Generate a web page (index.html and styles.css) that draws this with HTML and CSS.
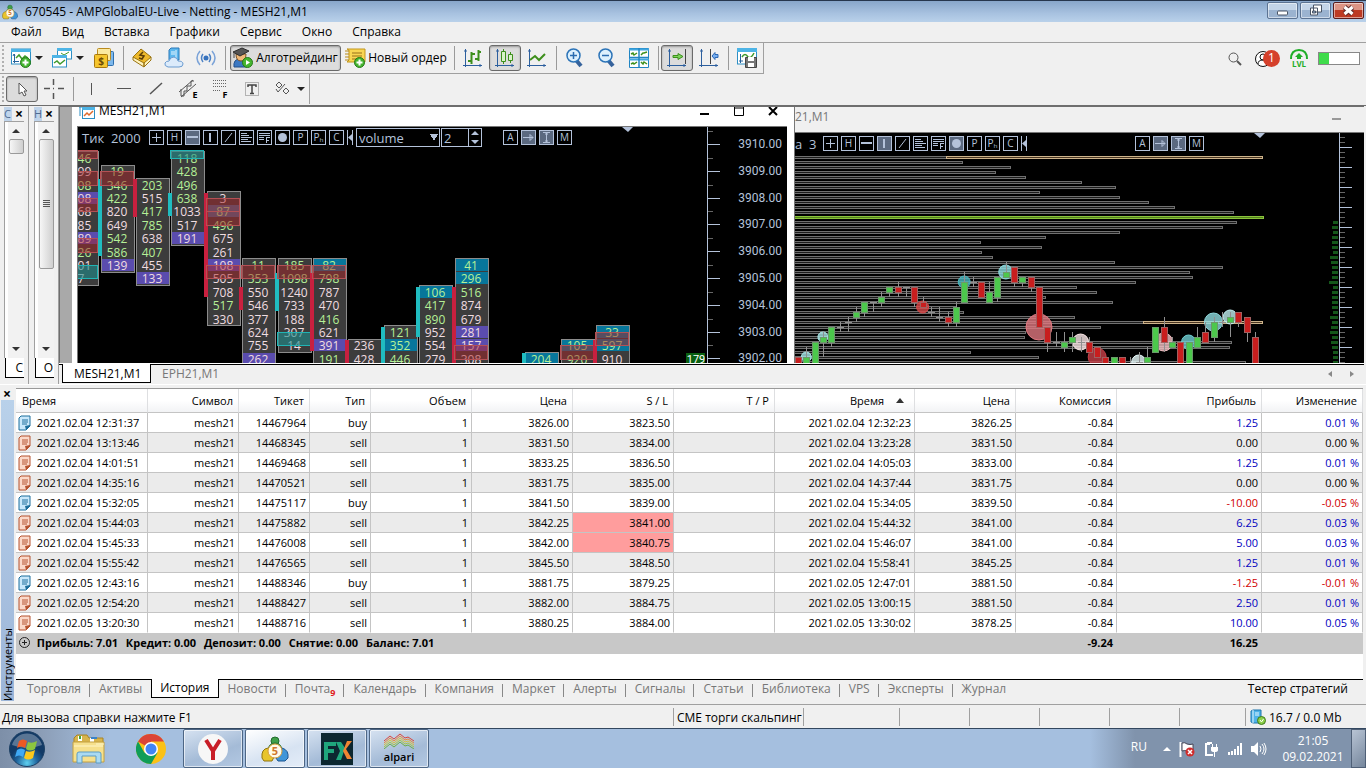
FILE: index.html
```
<!DOCTYPE html>
<html lang="ru">
<head>
    <meta charset="UTF-8">
    <meta name="viewport" content="width=device-width, initial-scale=1.0">
    <title>670545 - AMPGlobalEU-Live - Netting - MESH21,M1</title>
    <link rel="stylesheet" href="styles.css">
</head>
<body>
    <svg class="defs" aria-hidden="true">
        <symbol id="logo" viewBox="0 0 28 26">
            <circle cx="14" cy="5" r="4" fill="#3fa04a" stroke="#1f6b2c"/>
            <path d="M7 14q1-7 7-7t7 7z" fill="#57b65b" stroke="#1f6b2c"/>
            <path d="M1 22q-1-9 6-10 6 1 6 9l-2 4H3z" fill="#e8c52c" stroke="#8f7410"/>
            <path d="M15 22q0-9 6-10 7 2 6 10l-3 3h-7z" fill="#3f95d8" stroke="#1c5590"/>
            <circle cx="14" cy="15" r="7" fill="#fffbe8" stroke="#d59a3a"/>
            <text x="14" y="19" class="logo-five">5</text>
        </symbol>
        <symbol id="doc" viewBox="0 0 13 16">
            <path d="M3 1h9v10l-4 4H1V3z" fill="var(--page)" stroke="currentColor"/>
            <path d="M4 5h6M4 7h6M4 9h5" stroke="currentColor"/>
            <path d="M12 10v1l-4 4-1-4z" fill="currentColor"/>
        </symbol>
    </svg>

    <header class="titlebar">
        <svg class="app-icon"><use href="#logo"/></svg>
        <h1>670545 - AMPGlobalEU-Live - Netting - MESH21,M1</h1>
        <div class="window-buttons">
            <button type="button" aria-label="Свернуть"><svg viewBox="0 0 28 15"><rect x="9" y="8" width="10" height="4" rx="1" fill="#fff" stroke="#4a5566"/></svg></button>
            <button type="button" aria-label="Восстановить"><svg viewBox="0 0 28 15"><path d="M12 2h8v7h-8zM9 5h7v7H9z" fill="#fff" stroke="#4a5566"/><path d="M11 8h3v2h-3z" fill="#8ea5c2" stroke="#4a5566"/></svg></button>
            <button type="button" class="close" aria-label="Закрыть"><svg viewBox="0 0 28 15"><path d="M10 4l8 7M18 4l-8 7" stroke="#5d2b2b" stroke-width="5"/><path d="M10 4l8 7M18 4l-8 7" stroke="#fff" stroke-width="3"/></svg></button>
        </div>
    </header>

    <nav class="menu">
        <a href="#file">Файл</a>
        <a href="#view">Вид</a>
        <a href="#insert">Вставка</a>
        <a href="#charts">Графики</a>
        <a href="#tools">Сервис</a>
        <a href="#window">Окно</a>
        <a href="#help">Справка</a>
    </nav>

    <div class="toolbar-row">
        <div class="toolbar">
            <span class="grip"></span>
            <button type="button" class="tool drop" aria-label="Новый график">
                <svg viewBox="0 0 20 20"><rect x=".5" y="1" width="19" height="15" fill="#fff" stroke="#2d8fc4"/><rect x="0" y="1" width="20" height="3" fill="#4db4e6"/><path d="M3.500 6v9M2 13.500h6M3 6l-1 2M3 6l1 2" stroke="#27639c" fill="none"/><path d="M5 10l3-3 3 4 3-3 3 2" stroke="#3f9a2c" fill="none" stroke-width="1.5"/><circle cx="14.500" cy="14.500" r="5" fill="#45b52f" stroke="#257a18"/><path d="M14.500 11.500v6M11.500 14.500h6" stroke="#fff" stroke-width="2"/></svg>
            </button>
            <button type="button" class="tool drop" aria-label="Профили">
                <svg viewBox="0 0 20 20"><rect x="5.500" y="1" width="14" height="10" fill="#fff" stroke="#2d8fc4"/><rect x="5" y="0" width="15" height="3" fill="#4db4e6"/><path d="M9 5l3 2 5-3" stroke="#3f9a2c" fill="none"/><rect x=".5" y="8" width="14" height="11" fill="#fff" stroke="#2d8fc4"/><rect x="0" y="7" width="15" height="3" fill="#4db4e6"/><path d="M2 15l3-2 3 3 5-4" stroke="#3f9a2c" fill="none" stroke-width="1.500"/></svg>
            </button>
            <button type="button" class="tool" aria-label="Обзор рынка">
                <svg viewBox="0 0 20 20"><rect x="6.500" y="3.500" width="13" height="14" rx="1" fill="#7db8ec" stroke="#2d6fae"/><rect x="3.500" y=".5" width="13" height="12" rx="1" fill="#fbe9a0" stroke="#b98a1e"/><rect x=".5" y="6.500" width="13" height="13" rx="1" fill="#f5c52e" stroke="#a8780f"/><text x="7" y="17" class="dollar">$</text></svg>
            </button>
            <span class="sep"></span>
            <button type="button" class="tool" aria-label="MQL5">
                <svg viewBox="0 0 20 20"><path d="M1 9l8-8 10 8-7 9z" fill="#edb92c" stroke="#9b7410"/><path d="M1 9l11 6v4L1 12zM12 15l7-6v3l-7 7z" fill="#fff3bd" stroke="#9b7410"/><path d="M11 4l-3 3 4 1-2 3-3-1" fill="none" stroke="#5a3c06" stroke-width="1.500"/></svg>
            </button>
            <button type="button" class="tool" aria-label="Облако">
                <svg viewBox="0 0 20 20"><path d="M5 2l2-2h8v12H5z" fill="#5cb7ee" stroke="#2a78b8"/><path d="M7 4h4M7 6h4M12 2v8" stroke="#e8f6ff"/><path d="M4 19q-4-1-3-4 1-2 4-2 1-4 5-4 4 1 4 4 5 0 5 3t-4 3z" fill="#dcebfb" stroke="#6a9bd0"/></svg>
            </button>
            <button type="button" class="tool" aria-label="Сигналы">
                <svg viewBox="0 0 20 20"><circle cx="10" cy="10" r="2.500" fill="#3672bd"/><path d="M7 6q-3 4 0 8M13 6q3 4 0 8" fill="none" stroke="#4d83c6" stroke-width="1.500"/><path d="M4 3q-6 7 0 14M16 3q6 7 0 14" fill="none" stroke="#7ba3d8" stroke-width="1.500"/></svg>
            </button>
            <span class="sep"></span>
            <button type="button" class="tool labeled pressed">
                <svg viewBox="0 0 20 20"><path d="M1 19q-1-8 6-8t7 8z" fill="#3c78c2" stroke="#234f88"/><path d="M3 6q0 7 5 7t5-7z" fill="#f0b878" stroke="#7a5228"/><path d="M0 4l9-4 7 3-9 5z" fill="#555" stroke="#2d2d2d"/><path d="M1 5v5" stroke="#444"/><circle cx="14.500" cy="14.500" r="5" fill="#45b52f" stroke="#257a18"/><path d="M13 12l4 2.500-4 2.500z" fill="#fff"/></svg>
                Алготрейдинг
            </button>
            <button type="button" class="tool labeled order">
                <svg viewBox="0 0 20 20"><path d="M2 1h18v13H2l2-2V2z" fill="#f9d653" stroke="#c3961c"/><path d="M0 3h4M0 6h4M0 9h4M0 12h4" stroke="#b78a18"/><path d="M7 5h10M7 8h10M7 11h6" stroke="#97701a"/><circle cx="14.500" cy="14.500" r="5" fill="#45b52f" stroke="#257a18"/><path d="M14.500 11.500v6M11.500 14.500h6" stroke="#fff" stroke-width="2"/></svg>
                Новый ордер
            </button>
            <span class="sep"></span>
            <button type="button" class="tool" aria-label="Бары">
                <svg viewBox="0 0 20 20"><path d="M2.500 1v18M0 17.500h19M1 3h3M17 16v3" stroke="#2c5f9e" fill="none"/><path d="M8.500 4v12M5 13h3M8 6h4M15.500 2v11M12 11h3M15 4h3" stroke="#3d8f1c" stroke-width="2" fill="none"/></svg>
            </button>
            <button type="button" class="tool pressed" aria-label="Свечи">
                <svg viewBox="0 0 20 20"><path d="M2.500 1v18M0 17.500h19M1 3h3M17 16v3" stroke="#2c5f9e" fill="none"/><path d="M8.500 1v15M15.500 4v11" stroke="#3d8f1c"/><path d="M6.500 3.500h4v10h-4zM13.500 6.500h4v6h-4z" fill="#d9f4c8" stroke="#3d8f1c"/></svg>
            </button>
            <button type="button" class="tool" aria-label="Линия">
                <svg viewBox="0 0 20 20"><path d="M2.500 1v18M0 17.500h19M1 3h3M17 16v3" stroke="#2c5f9e" fill="none"/><path d="M3 12l5-4 4 4 6-6" fill="none" stroke="#3d8f1c" stroke-width="2"/></svg>
            </button>
            <span class="sep"></span>
            <button type="button" class="tool" aria-label="Увеличить">
                <svg viewBox="0 0 20 20"><path d="M11 12l5 6" stroke="#36639c" stroke-width="4"/><circle cx="8.500" cy="7.500" r="6.500" fill="#dcf0fd" stroke="#2c74b8" stroke-width="1.500"/><path d="M8.500 4v7M5 7.500h7" stroke="#2a6cb0" stroke-width="1.500"/></svg>
            </button>
            <button type="button" class="tool" aria-label="Уменьшить">
                <svg viewBox="0 0 20 20"><path d="M11 12l5 6" stroke="#36639c" stroke-width="4"/><circle cx="8.500" cy="7.500" r="6.500" fill="#dcf0fd" stroke="#2c74b8" stroke-width="1.500"/><path d="M5 7.500h7" stroke="#2a6cb0" stroke-width="1.500"/></svg>
            </button>
            <button type="button" class="tool" aria-label="Плитка">
                <svg viewBox="0 0 20 20"><path d="M.5.5h19v19H.5z" fill="#fff" stroke="#2184c2"/><path d="M0 1.500h20M0 11.500h20" stroke="#3fa6e0" stroke-width="2"/><path d="M10 0v20M0 9.500h20" stroke="#2184c2" stroke-width="1.500"/><path d="M2 6l2-1 1 2 3-2M12 7l2-2h1l3-1M2 16l2-1 1 1 3-2M12 14l2 2 1-2 3 2" stroke="#3d8f1c" fill="none" stroke-width="1.500"/></svg>
            </button>
            <span class="sep"></span>
            <button type="button" class="tool pressed" aria-label="Автопрокрутка">
                <svg viewBox="0 0 20 20"><path d="M2.500 1v18M0 17.500h19M1 3h3M17 16v3" stroke="#2c5f9e" fill="none"/><path d="M18.500 1v15" stroke="#444"/><path d="M6 7.500h5v-2l5 3-5 3v-2H6z" fill="#7bd35c" stroke="#3d8f1c"/></svg>
            </button>
            <button type="button" class="tool" aria-label="Сдвиг графика">
                <svg viewBox="0 0 20 20"><path d="M2.500 1v18M0 17.500h19M1 3h3M17 16v3" stroke="#2c5f9e" fill="none"/><path d="M11.500 1v15" stroke="#444"/><path d="M19 6.500h-3v-2l-3 3.500 3 3.500v-2h3z" fill="#77aef0" stroke="#2c68b5"/></svg>
            </button>
            <span class="sep"></span>
            <button type="button" class="tool" aria-label="Сохранить шаблон">
                <svg viewBox="0 0 20 20"><rect x=".5" y="1" width="19" height="15" fill="#fff" stroke="#2d8fc4"/><rect x="0" y="0" width="20" height="4" fill="#4db4e6"/><path d="M3.500 6v9M2 13h4" stroke="#27639c"/><path d="M5 9q3-5 6 0 3 2 6-4" stroke="#3f9a2c" fill="none" stroke-width="1.500"/><path d="M8.500 9.500h11v10h-11z" fill="#777" stroke="#444"/><path d="M11 9h6v4h-6zM11 15h6v4h-6z" fill="#fff"/></svg>
            </button>
        </div>
        <div class="account">
            <button type="button" aria-label="Поиск"><svg width="14" height="14" viewBox="0 0 14 14"><circle cx="5.500" cy="5.500" r="4.500" fill="none" stroke="#555"/><path d="M9 9l4 4" stroke="#555" stroke-width="2"/></svg></button>
            <button type="button" class="user" aria-label="Аккаунт">
                <svg width="16" height="16" viewBox="0 0 16 16"><circle cx="8" cy="8" r="7.500" fill="#fff" stroke="#111"/><circle cx="8" cy="6" r="3" fill="none" stroke="#111"/><path d="M3 13q0-4 5-4t5 4" fill="none" stroke="#111"/></svg>
                <span class="badge">1</span>
            </button>
            <div class="level">
                <svg width="18" height="11" viewBox="0 0 18 11"><path d="M1 10q0-9 8-9t8 9" fill="none" stroke="#1fae28" stroke-width="2"/><path d="M9 4l4 4h-2v2H7V8H5z" fill="#1fae28"/></svg>
                <span>LVL</span>
            </div>
            <div class="load"><div></div></div>
        </div>
    </div>

    <div class="toolbar-row second">
        <div class="toolbar">
            <span class="grip"></span>
            <button type="button" class="tool pressed" aria-label="Курсор"><svg viewBox="0 0 20 20"><path d="M7 4v11l3-2 2 4 2-1-2-4h3z" fill="#fff" stroke="#555"/></svg></button>
            <button type="button" class="tool" aria-label="Перекрестие"><svg viewBox="0 0 20 20"><path d="M9.500 0v6M9.500 14v6M0 9.500h6M14 9.500h6M9 9.500h1" stroke="#555" stroke-width="1.500"/></svg></button>
            <span class="sep"></span>
            <button type="button" class="tool" aria-label="Вертикальная линия"><svg viewBox="0 0 20 20"><path d="M9.500 4v12" stroke="#555"/></svg></button>
            <button type="button" class="tool" aria-label="Горизонтальная линия"><svg viewBox="0 0 20 20"><path d="M3 9.500h14" stroke="#555"/></svg></button>
            <button type="button" class="tool" aria-label="Трендовая линия"><svg viewBox="0 0 20 20"><path d="M4 15L16 4" stroke="#555" stroke-width="1.500"/></svg></button>
            <button type="button" class="tool" aria-label="Канал"><svg viewBox="0 0 20 20"><path d="M1 13L15 1M3 18L18 5" stroke="#555"/><path d="M3 10v7h3v-5h3V7h4V2h3" fill="none" stroke="#555"/><text x="17" y="19" class="letter">E</text></svg></button>
            <button type="button" class="tool" aria-label="Фибоначчи"><svg viewBox="0 0 20 20"><path d="M3 1.500h14M3 4.500h14M3 7.500h14M3 11.500h8" stroke="#666" stroke-dasharray="1 1"/><text x="15" y="19" class="letter">F</text></svg></button>
            <button type="button" class="tool" aria-label="Текст"><svg viewBox="0 0 20 20"><rect x="3.500" y="3.500" width="13" height="13" fill="none" stroke="#777" stroke-dasharray="1 1"/><path d="M6 8V6h8v2M10 6v9M8 14.500h4" fill="none" stroke="#444" stroke-width="1.500"/></svg></button>
            <button type="button" class="tool drop" aria-label="Объекты"><svg viewBox="0 0 20 20"><path d="M6 3l3 3-3 3-3-3zM13 9l3 3-3 3-3-3zM3 10l2 3 7-8" fill="none" stroke="#555"/></svg></button>
        </div>
    </div>

    <main class="workspace">
        <aside class="dock">
            <div class="dock-head"><span>С</span><button type="button" aria-label="Закрыть">×</button></div>
            <div class="dock-body"><div class="scroll"><i class="up"></i><b></b><i class="down"></i></div></div>
            <a class="dock-tab" href="#symbols">С</a>
        </aside>
        <aside class="dock wide">
            <div class="dock-head"><span>Н</span><button type="button" aria-label="Закрыть">×</button></div>
            <div class="dock-body"><div class="scroll"><i class="up"></i><b class="long"></b><i class="down"></i></div></div>
            <a class="dock-tab" href="#common">О</a>
        </aside>

        <section class="mdi">
            <div class="windows">
                <article class="chart-window active">
                    <div class="chart-title">
                        <svg class="chart-icon" viewBox="0 0 16 12"><path d="M1 0v9M0 0h3" stroke="#2d8fc4"/><rect x="3.500" y=".5" width="12" height="11" fill="#fff" stroke="#2d8fc4"/><rect x="3" y="0" width="13" height="3" fill="#4db4e6"/><path d="M5 9l3-3 2 2 4-4" fill="none" stroke="#e06a2c" stroke-width="1.500"/></svg>
                        <h2>MESH21,M1</h2>
                        <div class="chart-controls">
                            <button type="button" aria-label="Свернуть"><svg viewBox="0 0 10 10"><path d="M0 7h9" stroke="#000" stroke-width="2"/></svg></button>
                            <button type="button" aria-label="Развернуть"><svg viewBox="0 0 10 10"><path d="M.5 0v8.500h9V0M0 1h10" fill="none" stroke="#000"/></svg></button>
                            <button type="button" aria-label="Закрыть"><svg viewBox="0 0 10 10"><path d="M1 0l8 8M9 0L1 8" stroke="#000" stroke-width="2"/></svg></button>
                        </div>
                    </div>
                    <div class="chart">
                        <div class="chart-bar">
                            <span class="chart-label">Тик&nbsp; 2000</span>
                            <span class="tools" data-on="2"></span>
                            <select aria-label="Режим"><option>volume</option></select>
                            <span class="stepper"><input type="text" value="2" aria-label="Шаг"><i class="up"></i><i class="down"></i></span>
                            <span class="modes"></span>
                        </div>
                        <svg class="plot" id="footprint"></svg>
                        <svg class="scale" id="priceScale"></svg>
                    </div>
                </article>
                <article class="chart-window">
                    <div class="chart-title">
                        <h2>21,M1</h2>
                        <div class="chart-controls">
                            <button type="button" aria-label="Свернуть"><svg viewBox="0 0 10 10"><path d="M0 6h9" stroke="#999" stroke-width="2"/></svg></button>
                        </div>
                    </div>
                    <div class="chart">
                        <div class="chart-bar">
                            <span class="chart-label">а&nbsp; 3</span>
                            <span class="tools" data-on="3,7"></span>
                            <span class="modes"></span>
                        </div>
                        <svg class="plot" id="candles"></svg>
                        <svg class="scale" id="stepScale"></svg>
                    </div>
                </article>
            </div>
            <nav class="chart-tabs">
                <a class="current" href="#mesh">MESH21,M1</a>
                <a href="#eph">EPH21,M1</a>
                <span class="arrows"><i></i><i class="next"></i></span>
            </nav>
        </section>
    </main>

    <section class="toolbox">
        <div class="toolbox-side">
            <button type="button" aria-label="Закрыть">×</button>
            <span>Инструменты</span>
        </div>
        <div class="toolbox-main">
            <div class="history">
                <table>
                    <colgroup>
                        <col class="w132"><col class="w91"><col class="w71"><col class="w61">
                        <col class="w101"><col class="w101"><col class="w101"><col class="w101">
                        <col class="w140"><col class="w101"><col class="w101"><col class="w145"><col class="w101">
                    </colgroup>
                    <thead>
                        <tr>
                            <th>Время</th><th>Символ</th><th>Тикет</th><th>Тип</th><th>Объем</th>
                            <th>Цена</th><th>S / L</th><th>T / P</th><th>Время <i class="sorted"></i></th>
                            <th>Цена</th><th>Комиссия</th><th>Прибыль</th><th>Изменение</th>
                        </tr>
                    </thead>
                    <tbody id="deals"></tbody>
                    <tfoot>
                        <tr>
                            <td colspan="10">
                                <svg viewBox="0 0 13 16"><circle cx="6.500" cy="7.500" r="5" fill="none" stroke="#222"/><path d="M6.500 5v5M4 7.500h5" stroke="#222"/></svg>
                                <span>Прибыль: 7.01</span> <span>Кредит: 0.00</span> <span>Депозит: 0.00</span> <span>Снятие: 0.00</span> <span>Баланс: 7.01</span>
                            </td>
                            <td>-9.24</td><td>16.25</td><td></td>
                        </tr>
                    </tfoot>
                </table>
            </div>
            <nav class="tabs">
                <a href="#trade">Торговля</a>
                <a class="last" href="#assets">Активы</a>
                <a class="current" href="#history">История</a>
                <a href="#news">Новости</a>
                <a href="#mail">Почта<sub>9</sub></a>
                <a href="#calendar">Календарь</a>
                <a href="#company">Компания</a>
                <a href="#market">Маркет</a>
                <a href="#alerts">Алерты</a>
                <a href="#signals">Сигналы</a>
                <a href="#articles">Статьи</a>
                <a href="#library">Библиотека</a>
                <a href="#vps">VPS</a>
                <a href="#experts">Эксперты</a>
                <a class="last" href="#journal">Журнал</a>
                <a class="tester" href="#tester">Тестер стратегий</a>
            </nav>
        </div>
    </section>

    <footer class="status">
        <span class="hint">Для вызова справки нажмите F1</span>
        <span class="profile">CME торги скальпинг</span>
        <span class="cell big"></span>
        <span class="cell"></span>
        <span class="cell"></span>
        <span class="cell"></span>
        <span class="cell"></span>
        <span class="cell"></span>
        <span class="traffic">
            <svg width="16" height="16" viewBox="0 0 16 16"><path d="M1 2l2-1h8v13H3l-2-1z" fill="#4fb3e8" stroke="#1d74ad"/><path d="M3 1v13M5 4h4M5 6h4" stroke="#e3f5ff"/><circle cx="11.500" cy="11.500" r="4" fill="#8ccf4a" stroke="#3c7a1c"/><path d="M10 11l1.500 2 2-3" fill="none" stroke="#fff"/></svg>
            16.7 / 0.0 Mb
        </span>
    </footer>

    <footer class="taskbar">
        <button type="button" class="start" aria-label="Пуск">
            <svg width="38" height="38" viewBox="0 0 38 38">
                <defs><radialGradient id="orb" cy=".9"><stop offset="0" stop-color="#5fd0f0"/><stop offset=".6" stop-color="#1f639c"/><stop offset="1" stop-color="#123a66"/></radialGradient></defs>
                <circle cx="19" cy="19" r="17.500" fill="url(#orb)" stroke="#1d4064"/>
                <path d="M4 15a15.500 15.500 0 0 1 30 0q-15 6-30 0z" fill="#fff" opacity=".3"/>
                <path d="M11 11q4-3 8 0l-2 7q-4-3-8 0z" fill="#ee5a24"/>
                <path d="M20 12q4 2 9-1l-2 8q-5 3-9 0z" fill="#8dc63f"/>
                <path d="M9 20q4-3 8 0l-2 7q-4-3-8 0z" fill="#3fa9f5"/>
                <path d="M18 21q4 2 9-1l-2 8q-5 3-9 0z" fill="#fcc81b"/>
            </svg>
        </button>
        <button type="button" class="pin" aria-label="Проводник">
            <svg width="34" height="30" viewBox="0 0 34 30"><path d="M2 4l3-3h10l2 3h14v5H2z" fill="#d8b44c" stroke="#a88425"/><path d="M6 2h4v5H6zM18 4h4v5h-4z" fill="#fff"/><path d="M7 2h2v3H7z" fill="#3fa63a"/><path d="M19 3h6v2h-6z" fill="#3b83c8"/><path d="M1 8h31v20H1z" fill="#f6e08c" stroke="#c3a040"/><path d="M24 10h8M2 12h29" stroke="#fff6c8"/><path d="M5 29V20q0-2 2-2h20q2 0 2 2v9h-5v-7H10v7z" fill="#aadaf2" stroke="#5b9cc4"/></svg>
        </button>
        <button type="button" class="pin" aria-label="Chrome">
            <svg width="30" height="30" viewBox="0 0 30 30"><circle cx="15" cy="15" r="15" fill="#fbc116"/><path d="M15 15L2 7.500A15 15 0 0 1 28 7.500H15z" fill="#db4437"/><path d="M2 7.500A15 15 0 0 0 15 30l6.500-11.200L15 15 8.500 18.800z" fill="#0f9d58"/><circle cx="15" cy="15" r="7" fill="#fff"/><circle cx="15" cy="15" r="5.500" fill="#4285f4"/></svg>
        </button>
        <button type="button" class="task" aria-label="Яндекс Браузер">
            <svg width="30" height="30" viewBox="0 0 30 30"><circle cx="15" cy="15" r="15" fill="#f7f7f7"/><path d="M8 6l7 11 7-11M15 16v10" fill="none" stroke="#c81e28" stroke-width="4"/></svg>
        </button>
        <button type="button" class="task focused" aria-label="MetaTrader 5">
            <svg width="28" height="28" viewBox="0 0 28 26"><use href="#logo"/></svg>
        </button>
        <button type="button" class="task" aria-label="FX">
            <svg width="32" height="32" viewBox="0 0 32 32"><rect width="32" height="32" fill="#0c2730"/><path d="M3 9h12v4H7v3h6v4H7v7H3z" fill="#1fa67c"/><path d="M15 9h5l4 6-4 12h-5l4-9z" fill="#1fa67c"/><path d="M31 8l-6 8 6 10h-5l-4-8 4-10z" fill="#ef8532"/></svg>
        </button>
        <button type="button" class="task alpari">
            <svg width="32" height="16" viewBox="0 0 32 16"><g fill="none"><path d="M1 8l6-5 4 3 6-5 5 4 3-1 6 4" stroke="#d8453e"/><path d="M1 10l6-5 4 3 6-5 5 4 3-1 6 4" stroke="#e88b3a"/><path d="M1 12l6-5 4 3 6-5 5 4 3-1 6 4" stroke="#d8c23c"/><path d="M1 14l6-5 4 3 6-5 5 4 3-1 6 4" stroke="#a9c544"/><path d="M1 16l6-5 4 3 6-5 5 4 3-1 6 4" stroke="#6cae48"/></g></svg>
            <span>alpari</span>
        </button>
        <div class="tray">
            <span class="lang">RU</span>
            <svg width="8" height="4" viewBox="0 0 8 4"><path d="M4 0l4 4H0z" fill="#fff"/></svg>
            <svg width="16" height="16" viewBox="0 0 16 16"><path d="M1.500 1v15" stroke="#fff" stroke-width="2"/><path d="M3 2q3-1 5 1 3 1 6 0v7q-4 1-6 0t-5 0z" fill="#fff" stroke="#445"/><circle cx="11" cy="11" r="4.500" fill="#cf2d2d"/><path d="M9 9l4 4M13 9l-4 4" stroke="#fff" stroke-width="1.500"/></svg>
            <svg width="16" height="16" viewBox="0 0 16 16"><path d="M7 3H3v11h7" fill="none" stroke="#fff" stroke-width="2"/><path d="M4 1h5v2H4z" fill="#fff"/><path d="M8 6h7v3q0 2-3.500 2T8 9zM9 3h1v3H9zM13 3h1v3h-1zM11 11h1v5h-1z" fill="#fff"/></svg>
            <svg width="16" height="12" viewBox="0 0 16 12"><path d="M1 9h2v3H1zM4 8h2v4H4zM7 6h2v6H7zM10 3h2v9h-2zM13 0h2v12h-2z" fill="#fff"/></svg>
            <svg width="16" height="14" viewBox="0 0 16 14"><path d="M0 4h3l4-4v14l-4-4H0z" fill="#fff"/><path d="M9 4q2 3 0 6M11 2q4 5 0 10M13 1q4 6 0 12" fill="none" stroke="#fff"/></svg>
        </div>
        <div class="clock"><time>21:05</time><time>09.02.2021</time></div>
        <button type="button" class="desktop" aria-label="Показать рабочий стол"></button>
    </footer>

    <script src="script.js"></script>
</body>
</html>
```
FILE: styles.css
```
* {
    box-sizing: border-box;
}
body {
    margin: 0;
    height: 100vh;
    display: flex;
    flex-direction: column;
    overflow: hidden;
    background: #f0f0f0;
    color: #000;
    font: 12px/16px "Open Sans", "Noto Sans", sans-serif;
}
a {
    color: inherit;
    text-decoration: none;
}
button {
    margin: 0;
    padding: 0;
    border: 0;
    background: none;
    color: inherit;
    font: inherit;
}
h1, h2 {
    margin: 0;
    font-size: 12px;
    font-weight: normal;
}
svg {
    flex: none;
    display: block;
}
.defs {
    position: absolute;
    width: 0;
    height: 0;
}
.logo-five {
    font: bold 11px "Open Sans", sans-serif;
    text-anchor: middle;
    fill: #d0762a;
}

/* title bar and menu */
.titlebar {
    flex: none;
    display: flex;
    align-items: center;
    height: 22px;
    padding-left: 2px;
    border-top: 1px solid #26364d;
    background: linear-gradient(#88a6ca, #a8c2e0 60%, #b9d1ea);
}
.titlebar h1 {
    margin-left: 7px;
}
.app-icon {
    width: 16px;
    height: 16px;
}
.window-buttons {
    display: flex;
    gap: 2px;
    align-self: flex-start;
    margin: 1px 2px 0 auto;
}
.window-buttons button {
    width: 31px;
    height: 17px;
    border: 1px solid #5c7392;
    border-radius: 2px;
    background: linear-gradient(#c3d4e8 50%, #9bb3d0 50%);
    box-shadow: inset 0 0 0 1px rgba(255, 255, 255, 0.5);
}
.window-buttons .close {
    border-color: #5a1d1d;
    background: linear-gradient(#dd9484 50%, #bd3a24 50%);
}
.window-buttons svg {
    width: 29px;
    height: 15px;
}
.menu {
    flex: none;
    display: flex;
    gap: 20px;
    height: 21px;
    padding: 2px 11px 0;
    border-bottom: 1px solid #a0a0a0;
}

/* toolbars */
.toolbar-row {
    flex: none;
    display: flex;
    justify-content: space-between;
    height: 31px;
}
.toolbar {
    display: flex;
    align-items: center;
    height: 31px;
    border-right: 1px solid #a0a0a0;
    border-bottom: 1px solid #a0a0a0;
}
.second .toolbar {
    height: 30px;
    border-bottom: 0;
}
.grip {
    width: 2px;
    height: 26px;
    margin: 0 2px;
    background: repeating-linear-gradient(#b0b0b0 0 2px, #f0f0f0 2px 4px);
}
.sep {
    width: 1px;
    height: 24px;
    margin: 0 2px 0 3px;
    background: #9a9a9a;
}
.tool {
    display: flex;
    align-items: center;
    justify-content: center;
    width: 32px;
    height: 26px;
    border: 1px solid transparent;
    border-radius: 3px;
}
.tool svg {
    width: 20px;
    height: 20px;
    overflow: visible;
}
.drop {
    width: 41px;
    gap: 4px;
}
.drop::after {
    content: "";
    border: 4px solid transparent;
    border-top-color: #222;
    border-bottom: 0;
}
.pressed {
    border-color: #6a6a6a;
    background: #dcdcdc;
    box-shadow: inset 0 1px 2px #999;
}
.labeled {
    width: 111px;
    margin-left: 2px;
    gap: 3px;
    white-space: nowrap;
}
.order {
    width: 110px;
    margin-left: 0;
}
.dollar {
    font: bold 10px "Open Sans", sans-serif;
    text-anchor: middle;
    fill: #6b4a05;
}
.letter {
    font: bold 9px "Open Sans", sans-serif;
    text-anchor: middle;
}
.account {
    display: flex;
    align-items: center;
    gap: 10px;
    margin-right: 6px;
}
.user {
    position: relative;
    width: 30px;
    margin-left: -2px;
    padding-left: 5px;
}
.badge {
    position: absolute;
    top: -1px;
    right: 0;
    width: 17px;
    height: 17px;
    border-radius: 50%;
    background: #d5402b;
    color: #fff;
    text-align: center;
}
.level {
    width: 18px;
    text-align: center;
    color: #1fae28;
    font: bold 8px/8px "Open Sans", sans-serif;
}
.load {
    width: 42px;
    height: 13px;
    border: 1px solid #888;
    background: #fff;
}
.load div {
    width: 25%;
    height: 11px;
    background: #3fdc4b;
}

/* docked panels */
.workspace {
    flex: 1;
    min-height: 0;
    display: flex;
    padding-right: 2px;
    border-top: 1px solid #6e6e6e;
}
.dock {
    display: flex;
    flex-direction: column;
    width: 29px;
    padding: 1px 4px 6px 4px;
    border-right: 1px solid #a0a0a0;
}
.wide {
    width: 30px;
    padding-left: 5px;
}
.dock-head {
    display: flex;
    justify-content: space-between;
    height: 14px;
    align-items: center;
    font-size: 11px;
    line-height: 14px;
}
.dock-head span {
    width: 8px;
    background: #c0d4ea;
    color: #4f6c92;
}
.dock-head button,
.toolbox-side button {
    width: 10px;
    font-size: 14px;
    font-weight: bold;
    line-height: 14px;
}
.dock-body {
    flex: 1;
    min-height: 0;
    display: flex;
    justify-content: flex-end;
    border: 1px solid #a0a0a0;
    border-width: 1px 0 0 1px;
    background: #fff;
}
.scroll {
    width: 16px;
    display: flex;
    flex-direction: column;
    align-items: center;
    gap: 6px;
    padding: 7px 0 7px;
    background: #f2f2f2;
}
.scroll b {
    width: 15px;
    height: 15px;
    border: 1px solid #9a9a9a;
    border-radius: 2px;
    background: linear-gradient(90deg, #f6f6f6, #cfcfcf);
}
.scroll .long {
    height: 130px;
    display: flex;
    align-items: center;
    justify-content: center;
}
.scroll .long::after {
    content: "";
    width: 7px;
    height: 8px;
    background: repeating-linear-gradient(#555 0 1px, transparent 1px 2px);
}
.up, .down {
    border: 4px solid transparent;
    border-top: 0;
    border-bottom-color: #333;
}
.down {
    margin-top: auto;
    border-top: 4px solid #333;
    border-bottom: 0;
}
.dock-tab {
    align-self: flex-end;
    width: 19px;
    height: 20px;
    padding-right: 1px;
    border: 1px solid #000;
    border-width: 0 0 1px 1px;
    background: #fff;
    text-align: right;
    line-height: 19px;
}

/* chart windows */
.mdi {
    flex: 1;
    min-width: 0;
    display: flex;
    flex-direction: column;
}
.windows {
    flex: 1;
    min-height: 0;
    display: flex;
    padding-left: 12px;
    border: 1px solid #6e6e6e;
    border-width: 1px 0 0 1px;
    background: #a9a9a9;
}
.chart-window {
    flex: 1;
    min-width: 0;
    display: flex;
    flex-direction: column;
    background: #f0f0f0;
    color: #777;
}
.active {
    flex: none;
    width: 723px;
    padding: 0 7px 0 5px;
    border-right: 1px solid #777;
    background: #fff;
    color: #000;
}
.chart-title {
    flex: none;
    display: flex;
    align-items: flex-start;
    height: 25px;
    padding-top: 2px;
}
.active .chart-title {
    height: 19px;
    padding-top: 0;
}
.active h2 {
    margin-top: -4px;
}
.chart-icon {
    width: 16px;
    height: 12px;
    margin: 0 4px 0 2px;
}
.chart-controls {
    display: flex;
    gap: 24px;
    margin: 4px 22px 0 auto;
}
.active .chart-controls {
    margin: 0 9px 0 auto;
}
.chart-controls svg {
    width: 10px;
    height: 10px;
}
.chart {
    position: relative;
    flex: 1;
    min-height: 0;
    display: flex;
    overflow: hidden;
    border-top: 1px solid #777;
    background: #000;
    color: #b4c2da;
}
.active .chart {
    border-left: 1px solid #777;
}
.plot {
    flex: 1;
    min-width: 0;
    height: 100%;
}
.scale {
    width: 25px;
    height: 100%;
    border-left: 1px solid #b4c2da;
}
.active .scale {
    width: 80px;
}
.chart-bar {
    position: absolute;
    top: 1px;
    left: 0;
    display: flex;
    align-items: center;
    height: 19px;
}
.chart-label {
    width: 28px;
    overflow: hidden;
    font-size: 13px;
    white-space: nowrap;
}
.active .chart-label {
    width: 71px;
    padding-left: 4px;
}
.tools, .modes {
    display: flex;
    gap: 3px;
}
.modes {
    margin-left: 21px;
}
.chart-window:not(.active) .modes {
    margin-left: 108px;
}
.mark {
    width: 15px;
    height: 15px;
    border: 1px solid #b4c2da;
    color: #b4c2da;
    font-size: 10px;
    line-height: 13px;
}
.mark svg {
    width: 13px;
    height: 13px;
}
.on {
    background: #5b6980;
}
.fold {
    width: 6px;
    height: 15px;
    border-right: 1px solid #b4c2da;
    border-left: 1px solid #b4c2da;
    font-size: 0;
}
.chart-bar select {
    width: 84px;
    height: 19px;
    margin: 0 1px 0 3px;
    padding: 0 2px;
    appearance: none;
    border: 1px solid #b4c2da;
    background: conic-gradient(from -30deg at 50% 100%, #b4c2da 60deg, transparent 0) 73px 5px / 8px 7px no-repeat #000;
    color: #b4c2da;
    font: 13px "Open Sans", sans-serif;
}
.stepper {
    display: grid;
    grid-template-columns: 27px 13px;
    grid-template-rows: 8px 8px;
    width: 41px;
    height: 19px;
    border: 1px solid #b4c2da;
}
.stepper input {
    grid-row: span 2;
    height: 17px;
    padding: 0 2px;
    border: 0;
    border-right: 1px solid #b4c2da;
    background: #000;
    color: #b4c2da;
    font: 13px "Open Sans", sans-serif;
}
.stepper i {
    width: 8px;
    margin: 2px;
    border-bottom-color: #b4c2da;
}
.stepper .down {
    margin-top: 3px;
    border-top-color: #b4c2da;
}
.num {
    font: 12px "Open Sans", sans-serif;
    text-anchor: middle;
}
.tag {
    font: 11px Roboto, sans-serif;
    text-anchor: middle;
}
.price {
    font: 12px Roboto, sans-serif;
    text-anchor: end;
    fill: #b4c2da;
}
.chart-tabs {
    flex: none;
    display: flex;
    height: 21px;
    padding-left: 3px;
    border-top: 1px solid #fff;
    background: linear-gradient(#000 1px, transparent 1px);
    color: #777;
}
.chart-tabs a {
    width: 88px;
    height: 19px;
    padding-left: 11px;
    line-height: 20px;
}
.chart-tabs .current {
    width: 89px;
    border: 1px solid #000;
    border-top: 0;
    background: #fff;
    color: #000;
}
.arrows {
    display: flex;
    gap: 18px;
    margin: 7px 10px 0 auto;
}
.arrows i {
    height: 6px;
    border: 3px solid transparent;
    border-right: 4px solid #888;
    border-left: 0;
}
.arrows .next {
    border-right: 0;
    border-left: 4px solid #888;
}

/* toolbox */
.toolbox {
    flex: none;
    display: flex;
    height: 320px;
    padding: 3px 3px 3px 0;
    border-top: 1px solid #fff;
}
.toolbox-side {
    width: 16px;
    display: flex;
    flex-direction: column;
}
.toolbox-side button {
    width: 14px;
    line-height: 12px;
}
.toolbox-side span {
    flex: 1;
    width: 13px;
    margin: 0 0 0 1px;
    background: linear-gradient(#9cb5d8, #b9d1ea);
    writing-mode: vertical-rl;
    transform: rotate(180deg);
    font-size: 11px;
    line-height: 13px;
    text-align: start;
}
.toolbox-main {
    flex: 1;
    min-width: 0;
    display: flex;
    flex-direction: column;
}
.history {
    flex: 1;
    border-top: 1px solid #999;
    background: #fff;
}
table {
    width: 100%;
    table-layout: fixed;
    border-collapse: separate;
    border-spacing: 0;
    font-size: 11px;
    line-height: 18px;
}
.w61 { width: 61px; }
.w71 { width: 71px; }
.w91 { width: 91px; }
.w101 { width: 101px; }
.w132 { width: 132px; }
.w140 { width: 140px; }
.w145 { width: 145px; }
th, td {
    height: 20px;
    padding: 0 3px 0 0;
    border-right: 1px solid #c4c4c4;
    border-bottom: 1px solid #c4c4c4;
    text-align: right;
    white-space: nowrap;
}
th {
    height: 24px;
    padding-right: 5px;
    border-right-color: #dedfe1;
    background: linear-gradient(#fff 50%, #f2f3f5);
    font-weight: normal;
}
th:first-child {
    padding-left: 6px;
    text-align: left;
}
td:first-child {
    text-align: left;
}
td svg {
    display: inline-block;
    width: 13px;
    height: 16px;
    margin: 1px 3px 0 2px;
    vertical-align: top;
}
tbody tr:nth-child(even) {
    background: #ebebeb;
}
tbody tr:last-child td {
    border-bottom-color: #fff;
}
.sorted {
    display: inline-block;
    margin: 0 5px 2px 9px;
    border: 4px solid transparent;
    border-top: 0;
    border-bottom: 5px solid #333;
}
.buy {
    --page: #c9e8fb;
    color: #1d6f9c;
}
.sell {
    --page: #fbd9c9;
    color: #b5532f;
}
.hit {
    background: #ff9d9d;
}
.plus {
    color: #0000c0;
}
.minus {
    color: #d00000;
}
tfoot td {
    height: 21px;
    border-color: #c8c8c8;
    background: #c8c8c8;
    font-weight: bold;
}
tfoot span {
    margin-right: 5px;
}
.tabs {
    flex: none;
    display: flex;
    height: 22px;
    padding-left: 2px;
    border-top: 1px solid #000;
    color: #777;
}
.tabs a {
    position: relative;
    height: 19px;
    padding: 0 9px;
    line-height: 18px;
}
.tabs a:not(.current, .tester, .last)::after {
    content: "";
    position: absolute;
    top: 4px;
    right: 0;
    width: 1px;
    height: 13px;
    background: #888;
}
.tabs .current {
    margin-top: -1px;
    padding: 0 8px;
    border: 1px solid #000;
    border-top: 0;
    background: #fff;
    color: #000;
}
.tabs sub {
    color: #e02020;
    font-size: 9px;
    font-weight: bold;
    line-height: 0;
}
.tabs .tester {
    margin-left: auto;
    padding-right: 15px;
    color: #000;
}

/* status bar */
.status {
    flex: none;
    display: flex;
    height: 24px;
    padding: 3px 0 2px;
    border-top: 1px solid #a0a0a0;
    line-height: 19px;
}
.hint {
    flex: 1;
    padding-left: 2px;
}
.profile {
    width: 130px;
    padding-left: 3px;
    border-left: 1px solid #a0a0a0;
    white-space: nowrap;
}
.cell {
    width: 70px;
    border-left: 1px solid #a0a0a0;
}
.big {
    width: 96px;
}
.cell:nth-child(8) {
    width: 66px;
}
.traffic {
    display: flex;
    align-items: center;
    gap: 3px;
    width: 121px;
    padding-left: 4px;
    border-left: 1px solid #a0a0a0;
}

/* taskbar */
.taskbar {
    flex: none;
    display: flex;
    height: 40px;
    border-top: 1px solid #33475f;
    background: linear-gradient(90deg, #7d8fa8, #8b9db6 40px, #a5bfdf 110px, #a5bfdf 1090px, #8093ac 1135px);
}
.taskbar button {
    display: flex;
    align-items: center;
    justify-content: center;
}
.start {
    width: 54px;
}
.pin {
    width: 70px;
}
.pin + .pin {
    width: 54px;
}
.task {
    width: 60px;
    margin-right: 2px;
    border: 1px solid #4d6685;
    border-radius: 2px;
    background: linear-gradient(160deg, #d6e2f1, #a4bbd7 60%, #b3c8e2);
    box-shadow: inset 0 0 0 1px rgba(255, 255, 255, 0.6);
}
.pin + .task {
    margin-left: 5px;
}
.taskbar .task.focused {
    background: linear-gradient(160deg, #fff, #d7e3f2 60%, #e4edf8);
}
.taskbar .alpari {
    flex-direction: column;
    font-size: 11px;
    font-weight: 600;
    line-height: 15px;
}
.tray {
    display: flex;
    align-items: center;
    gap: 8px;
    margin: 0 8px 0 auto;
    color: #fff;
}
.lang {
    margin-right: 8px;
    padding-bottom: 4px;
}
.clock {
    display: flex;
    flex-direction: column;
    width: 76px;
    padding-top: 4px;
    color: #fff;
    text-align: center;
}
.desktop {
    width: 15px;
    border: 1px solid #4f6077;
    background: linear-gradient(135deg, #b8c4d4, #76879d);
}
```
FILE: script.js
```
const svgNS = 'http://www.w3.org/2000/svg';

function draw(parent, name, attrs, text) {
    const el = document.createElementNS(svgNS, name);
    Object.entries(attrs).forEach(([key, value]) => el.setAttribute(key, value));
    if (text !== undefined) el.textContent = text;
    parent.appendChild(el);
}

function rect(parent, x, y, width, height, fill, stroke = 'none') {
    draw(parent, 'rect', { x, y, width, height, fill, stroke, 'shape-rendering': 'crispEdges' });
}

// History rows: open time, ticket, type, open price, stop, close time, close price, profit, change, stop hit
const deals = [
    ['2021.02.04 12:31:37', '14467964', 'buy', '3826.00', '3823.50', '2021.02.04 12:32:23', '3826.25', '1.25', '0.01 %'],
    ['2021.02.04 13:13:46', '14468345', 'sell', '3831.50', '3834.00', '2021.02.04 13:23:28', '3831.50', '0.00', '0.00 %'],
    ['2021.02.04 14:01:51', '14469468', 'sell', '3833.25', '3836.50', '2021.02.04 14:05:03', '3833.00', '1.25', '0.01 %'],
    ['2021.02.04 14:35:16', '14470521', 'sell', '3831.75', '3835.00', '2021.02.04 14:37:44', '3831.75', '0.00', '0.00 %'],
    ['2021.02.04 15:32:05', '14475117', 'buy', '3841.50', '3839.00', '2021.02.04 15:34:05', '3839.50', '-10.00', '-0.05 %'],
    ['2021.02.04 15:44:03', '14475882', 'sell', '3842.25', '3841.00', '2021.02.04 15:44:32', '3841.00', '6.25', '0.03 %', true],
    ['2021.02.04 15:45:33', '14476008', 'sell', '3842.00', '3840.75', '2021.02.04 15:46:07', '3841.00', '5.00', '0.03 %', true],
    ['2021.02.04 15:55:42', '14476565', 'sell', '3845.50', '3848.50', '2021.02.04 15:58:41', '3845.25', '1.25', '0.01 %'],
    ['2021.02.05 12:43:16', '14488346', 'buy', '3881.75', '3879.25', '2021.02.05 12:47:01', '3881.50', '-1.25', '-0.01 %'],
    ['2021.02.05 12:54:20', '14488427', 'sell', '3882.00', '3884.75', '2021.02.05 13:00:15', '3881.50', '2.50', '0.01 %'],
    ['2021.02.05 13:20:30', '14488716', 'sell', '3880.25', '3884.00', '2021.02.05 13:30:02', '3878.25', '10.00', '0.05 %']
];

document.getElementById('deals').innerHTML = deals.map(([open, ticket, type, price, stop, close, exit, profit, change, hit]) => {
    const tone = profit === '0.00' ? '' : profit.startsWith('-') ? 'minus' : 'plus';
    return `<tr><td><svg class="${type}"><use href="#doc"/></svg> ${open}</td><td>mesh21</td><td>${ticket}</td><td>${type}</td><td>1</td>
        <td>${price}</td><td class="${hit ? 'hit' : ''}">${stop}</td><td></td><td>${close}</td><td>${exit}</td><td>-0.84</td>
        <td class="${tone}">${profit}</td><td class="${tone}">${change}</td></tr>`;
}).join('');

// Small square buttons above the charts
const path = (d) => `<svg viewBox="0 0 13 13"><path d="${d}" fill="none" stroke="#b4c2da"/></svg>`;
const marks = [
    path('M6.5 2v9M2 6.5h9'), 'H', path('M1 6.5h11M1 5.500h11'), path('M6.5 2v9M5.500 2v9'), path('M3 11l7-9'),
    path('M1 2.500h6M1 4.500h8M1 6.500h11M1 8.500h7M1 10.500h10'), path('M1 2.500h11M1 4.500h11M1 6.500h5M1 8.500h5M8.500 12V6M8 6.500h4M8 9.500h3'),
    '<svg viewBox="0 0 13 13"><circle cx="6.5" cy="6.5" r="4.500" fill="#b4c2da"/></svg>', 'P', 'Pₕ', 'C'
];
document.querySelectorAll('.tools').forEach((box) => {
    const on = box.dataset.on.split(',').map(Number);
    box.innerHTML = marks.map((mark, i) => `<button type="button" class="mark ${on.includes(i) ? 'on' : ''}">${mark}</button>`).join('') +
        '<button type="button" class="fold" aria-label="Свернуть панель"><svg width="4" height="13" viewBox="0 0 4 13"><path d="M4 3v7L0 6.500z" fill="#b4c2da"/></svg></button>';
});
document.querySelectorAll('.modes').forEach((box) => {
    box.innerHTML = `<button type="button" class="mark">A</button>
        <button type="button" class="mark on">${path('M1 6.500h10M8 3.500l3 3-3 3z')}</button>
        <button type="button" class="mark on">${path('M3 1.500h7M3 11.500h7M6.500 2v9M5 3h3M5 10h3')}</button>
        <button type="button" class="mark">M</button>`;
});

// Footprint columns. Each cell is a volume and its flags:
// g - green text, v - violet cell, b - blue cell
const step = 13.4;
const rowY = (row) => 17.4 + step * row;
const columns = [
    { at: -1, row: 1, cells: '346g 599 308g 308v 368 385 389v 326g 301 7', red: [0, 2, 4, 7], teal: [9] },
    { at: 0, row: 2, cells: '19g 346g 422g 820 649 542g 586g 139v', red: [2], bar: ['up', 52, 129] },
    { at: 1, row: 3, cells: '203g 515 417g 785g 638 407g 455 133v', bar: ['down', 52, 90] },
    { at: 2, row: 1, cells: '118g 428g 496g 638g 1033 517 191v', teal: [0], bar: ['up', 66, 89] },
    { at: 3, row: 4, cells: '3 87s 496g 675 261 108v 505 708 517g 330', red: [4, 5, 9], bar: ['down', 66, 170] },
    { at: 4, row: 9, cells: '11g 353g 550 546 377 624 755 262v', red: [9], bar: ['down', 160, 183] },
    { at: 5, row: 9, cells: '185g 1098g 1240 733 188 307 14', red: [9], teal: [14], bar: ['up', 146, 184] },
    { at: 6, row: 9, cells: '82b 798g 787 470 416g 621 391v 191g', red: [9], bar: ['down', 146, 224] },
    { at: 7, row: 15, cells: '236 428', bar: ['down', 213, 240] },
    { at: 8, row: 14, cells: '121g 352b 446g', bar: ['up', 200, 240] },
    { at: 9, row: 11, cells: '106b 417g 890g 952 554 279', bar: ['up', 160, 210] },
    { at: 10, row: 9, cells: '41b 296b 516g 874 679 281v 157v 308', red: [15], bar: ['down', 160, 240] },
    { at: 12, row: 16, cells: '204b', bar: ['up', 226, 240] },
    { at: 13, row: 15, cells: '105b 920g', red: [15] },
    { at: 14, row: 14, cells: '33b 597b 910', red: [14], bar: ['down', 213, 240] }
];
const cellFill = { v: '#5a4cae', b: '#07769b', s: '#3f6a90' };
const footprint = document.getElementById('footprint');

columns.forEach(({ at, row, cells, red = [], teal = [], bar }) => {
    const left = Math.round(22.5 + 35.4 * at);
    const list = cells.split(' ');
    const top = Math.round(rowY(row) - step / 2);
    const height = Math.round(step * list.length);
    rect(footprint, left, top, 33, height, '#3c3c3c');
    list.forEach((cell, i) => {
        const fill = cellFill[cell.slice(-1)];
        if (fill) rect(footprint, left, rowY(row + i) - 6, 33, 12, fill);
    });
    rect(footprint, left, top, 33, height, 'none', '#8c8c8c');
    if (bar) rect(footprint, left - 3, bar[1], 4, bar[2] - bar[1], bar[0] === 'up' ? '#20bcc0' : '#c8203f');
    list.forEach((cell, i) => {
        const fill = /[gbs]$/.test(cell) ? '#b5f097' : '#f0dde0';
        draw(footprint, 'text', { x: left + 16, y: rowY(row + i) + 5, class: 'num', fill }, parseInt(cell));
    });
    const mark = (k, fill, stroke) => {
        const y = Math.max(Math.round(rowY(k)), 23);
        rect(footprint, left - 1, y, 33, Math.round(rowY(k + 1)) - y, fill, stroke);
    };
    red.forEach((k) => mark(k, 'rgba(165, 35, 40, 0.5)', '#b45054'));
    teal.forEach((k) => mark(k, 'rgba(30, 140, 140, 0.6)', '#20b4b4'));
});
rect(footprint, 608, 226, 19, 12, '#0a5f10');
draw(footprint, 'text', { x: 618, y: 236, class: 'tag', fill: '#fff' }, '179');
draw(footprint, 'path', { d: 'M544 0h11l-5 5z', fill: '#b4c2da' });

const priceScale = document.getElementById('priceScale');
for (let i = 0; i < 9; i++) {
    const y = Math.round(17 + 26.8 * i);
    rect(priceScale, 0, y, 12, 1, '#b4c2da');
    rect(priceScale, 0, y - 13, 5, 1, '#666');
    draw(priceScale, 'text', { x: 74, y: y + 4, class: 'price' }, `${3910 - i}.00`);
}

// Volume profile: right end of each level, one level every 5px
const candles = document.getElementById('candles');
const levelY = (level) => 24 + 5 * level;
const profile = [
    151, 167, 215, 200, 230, 286, 320, 244, 324, 353, 379, 438, 468, 441, 427, 324, 250, 185, 246, 186, 197,
    319, 427, 394, 397, 340, 281, 301, 250, 317, 160, 168, 279, 348, 305, 230, 229, 436, 434, 175, 243, 450
];
profile.forEach((end, level) => {
    const green = level === 12;
    rect(candles, -2, levelY(level) - 1, end + 2, 2, green ? '#55801c' : '#1c1c1c', green ? '#8ac43c' : '#707070');
});
rect(candles, 151, 23, 316, 2, '#4a3520', '#cdb48c');
rect(candles, 348, 188, 119, 2, '#4a3520', '#cdb48c');

// Trade clusters: candle number, level, radius, colour
[
    [1, 40, 5, '#a8e8e8'], [3, 36, 5, '#a8e8e8'], [15, 30, 6, '#d84848'], [20, 25, 6, '#48b8c0'], [25, 23, 7, '#8cdce0'],
    [29, 34, 13, '#e07880'], [34, 37, 8, '#fbe8e8'], [36, 40, 9, '#c84048'], [41, 41, 7, '#e8fbfb'], [44, 37, 9, '#f4c0c4'],
    [47, 37, 7, '#70d0d4'], [50, 33, 9, '#90dce0'], [52, 32, 7, '#c0f0f0']
].forEach(([n, level, r, fill]) => {
    draw(candles, 'circle', { cx: 3 + 8.31 * n, cy: levelY(level), r, fill, stroke: fill, 'fill-opacity': 0.8 });
});

// Candles: colour, body top, body bottom, wick top, wick bottom (in levels)
[
    'r 40 42 40 42', 'g 40 42 38 42', 'g 37 42 37 42', 'g 36 37 35 40', 'g 34 37 34 38', 'd 34 34 33 35', 'd 33 33 32 35',
    'g 31 32 30 33', 'g 29 31 29 32', 'd 29 29 29 31', 'g 28 29 27 30', 'g 26 27 26 28', 'r 26 27 25 28', 'd 26 26 26 28',
    'r 26 29 26 30', 'r 29 30 28 30', 'd 31 31 30 32', 'd 32 32 30 33', 'r 32 33 31 34', 'g 30 33 29 34', 'g 25 29 23 29',
    'd 25 25 24 26', 'r 25 28 25 28', 'g 27 29 25 29', 'g 24 28 24 29', 'g 23 24 21 24', 'r 22 25 22 26', 'g 24 25 24 26',
    'r 24 26 24 27', 'r 26 34 26 34', 'r 34 37 34 39', 'd 37 37 35 38', 'g 37 38 35 39', 'g 36 37 35 39', 'd 37 37 36 39',
    'r 37 39 36 39', 'r 38 40 38 40', 'r 40 42 40 42', 'g 40 42 40 42', 'r 40 42 40 42', 'd 42 42 40 42', 'd 41 41 39 42',
    'g 40 41 38 42', 'g 34 39 34 39', 'r 34 37 32 39', 'g 37 38 36 38', 'r 37 42 37 42', 'g 37 42 37 42', 'g 36 38 34 38',
    'r 35 37 33 37', 'g 33 36 32 37', 'd 33 33 31 34', 'g 32 33 31 36', 'r 31 33 31 34', 'r 32 35 32 37', 'r 36 42 35 42'
].forEach((candle, n) => {
    const [kind, top, bottom, high, low] = candle.split(' ');
    const x = Math.round(3 + 8.31 * n);
    rect(candles, x, levelY(+high), 1, 5 * (low - high), '#909090');
    if (kind === 'd') rect(candles, x - 3, levelY(+top), 7, 1, '#909090');
    else rect(candles, x - 3, levelY(+top), 6, 5 * (bottom - top), kind === 'g' ? '#4cc84c' : '#c81e1e', kind === 'g' ? '#6a9a6a' : '#a06060');
});
draw(candles, 'path', { d: 'M459 0h11l-5 5z', fill: '#b4c2da' });

// Market depth along the right edge of the plot
const depth = [5, 6, 5, 6, 6, 6, 5, 8, 7, 6, 6, 6, 9, 5, 6, 6, 6, 6, 5, 8, 6, 7, 8, 6, 7, 6, 5, 5, 5];
depth.forEach((width, i) => rect(candles, 543 - width, 88 + 5 * i, width, 3, '#14561a'));

const stepScale = document.getElementById('stepScale');
for (let i = 0; i < 46; i++) {
    const major = i % 4 === 2;
    rect(stepScale, 0, 4 + 5 * i, major ? 12 : 5, 1, major ? '#b4c2da' : '#666');
}
```
